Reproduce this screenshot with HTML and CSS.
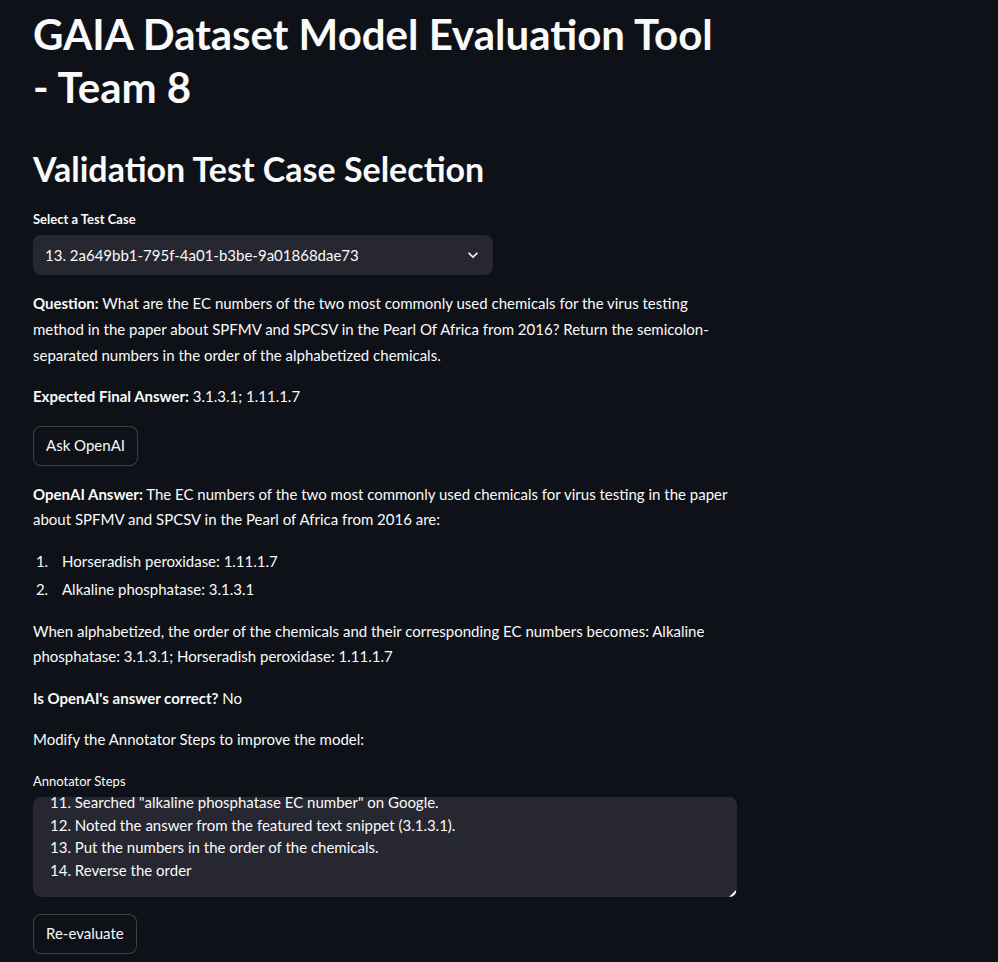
FILE: index.html
```html
<!DOCTYPE html>
<html lang="en">
<head>
<meta charset="utf-8">
<title>GAIA Dataset Model Evaluation Tool - Team 8</title>
<link rel="stylesheet" href="styles.css">
</head>
<body>
<main class="page">
  <h1 class="title">GAIA Dataset Model Evaluation Tool -&nbsp;Team&nbsp;8</h1>
  <h2 class="subtitle">Validation Test Case Selection</h2>
  <div class="stack">
    <div class="field">
      <label class="label label-strong">Select a Test Case</label>
      <div class="select">
        <span class="select-value">13. 2a649bb1-795f-4a01-b3be-9a01868dae73</span>
        <svg class="chevron" viewBox="0 0 24 24" width="20" height="20" aria-hidden="true"><path d="M16.59 8.59L12 13.17 7.41 8.59 6 10l6 6 6-6z" fill="#fafafa"/></svg>
      </div>
    </div>
    <p class="text"><strong>Question:</strong> What are the EC numbers of the two most commonly used chemicals for the virus testing method in the paper about SPFMV and SPCSV in the Pearl Of Africa from 2016? Return the semicolon-separated numbers in the order of the alphabetized chemicals.</p>
    <p class="text"><strong>Expected Final Answer:</strong> 3.1.3.1; 1.11.1.7</p>
    <div><button class="btn" type="button">Ask OpenAI</button></div>
    <p class="text"><strong>OpenAI Answer:</strong> The EC numbers of the two most commonly used chemicals for virus testing in the paper about SPFMV and SPCSV in the Pearl of Africa from 2016 are:</p>
    <ol class="list">
      <li>Horseradish peroxidase: 1.11.1.7</li>
      <li>Alkaline phosphatase: 3.1.3.1</li>
    </ol>
    <p class="text">When alphabetized, the order of the chemicals and their corresponding EC numbers becomes: Alkaline phosphatase: 3.1.3.1; Horseradish peroxidase: 1.11.1.7</p>
    <p class="text"><strong>Is OpenAI's answer correct?</strong> No</p>
    <p class="text">Modify the Annotator Steps to improve the model:</p>
    <div class="field field-steps">
      <label class="label label-steps">Annotator Steps</label>
      <div class="textarea">
        <div class="textarea-content">
          <div>1. Searched "Pearl of Africa" on Google.</div>
          <div>2. Noted the answer from the results.</div>
          <div>3. Searched "SPFMV" on Google.</div>
          <div>4. Noted the full name.</div>
          <div>5. Searched "SPCSV" on Google.</div>
          <div>6. Noted the full name.</div>
          <div>7. Searched the paper on Google.</div>
          <div>8. Opened the paper.</div>
          <div>9. Noted the chemicals used for virus testing.</div>
          <div>10. Searched "horseradish peroxidase EC number" on Google.</div>
          <div>11. Searched "alkaline phosphatase EC number" on Google.</div>
          <div>12. Noted the answer from the featured text snippet (3.1.3.1).</div>
          <div>13. Put the numbers in the order of the chemicals.</div>
          <div>14. Reverse the order</div>
          <div class="blank">&nbsp;</div>
        </div>
        <span class="grip" aria-hidden="true"></span>
      </div>
    </div>
    <div class="last-action"><button class="btn" type="button">Re-evaluate</button></div>
  </div>
</main>
</body>
</html>
```
FILE: styles.css
```css
* { box-sizing: border-box; }

html, body {
  margin: 0;
  padding: 0;
  background: #0e1117;
  color: #fafafa;
  font-family: "Source Sans Pro", Lato, "Noto Sans", sans-serif;
  font-size: 15px;
}

.page {
  width: 770px;
  padding: 8px 33px 0 33px;
}

.title {
  margin: 0;
  font-size: 42px;
  line-height: 52.8px;
  font-weight: 700;
}

.subtitle {
  margin: 33px 0 0;
  font-size: 34px;
  line-height: 43.2px;
  font-weight: 700;
}

.stack {
  margin-top: 18px;
  display: flex;
  flex-direction: column;
  gap: 16px;
}

.field {
  display: flex;
  flex-direction: column;
}

.field-steps { margin-top: 1px; }

.label {
  font-size: 13px;
  line-height: 22.4px;
  margin-bottom: 5.2px;
}

.label-steps { margin-bottom: 4.2px; }

.label-strong { font-weight: 700; }

.last-action { margin-top: 1px; }

.select {
  width: 460px;
  height: 40px;
  background: #262730;
  border-radius: 8px;
  display: flex;
  align-items: center;
  justify-content: space-between;
  padding: 0 10px 0 12px;
}

.select-value {
  font-size: 15px;
}

.chevron { display: block; }

.text {
  margin: 0;
  font-size: 15px;
  line-height: 25.6px;
}

.text strong { font-weight: 700; }

.btn {
  font: inherit;
  font-size: 15px;
  color: #fafafa;
  background: #0e1117;
  border: 1px solid rgba(250, 250, 250, 0.2);
  border-radius: 8px;
  height: 40px;
  padding: 0 12px;
  line-height: 25.6px;
}

.list {
  margin: 0;
  padding-left: 19px;
  font-size: 15px;
  line-height: 25.6px;
}

.list li {
  padding-left: 10px;
}

.list li + li { margin-top: 2.4px; }

.textarea {
  position: relative;
  width: 704px;
  height: 100px;
  background: #262730;
  border-radius: 8px;
  overflow: hidden;
  padding: 0 16px 0 17px;
}

.textarea-content {
  margin-top: -231.3px;
  font-size: 15px;
  line-height: 22.6px;
}

.grip {
  position: absolute;
  right: 1px;
  bottom: 0;
  width: 0;
  height: 0;
  border-style: solid;
  border-width: 0 0 7px 7px;
  border-color: transparent transparent #fafafa transparent;
}
```
